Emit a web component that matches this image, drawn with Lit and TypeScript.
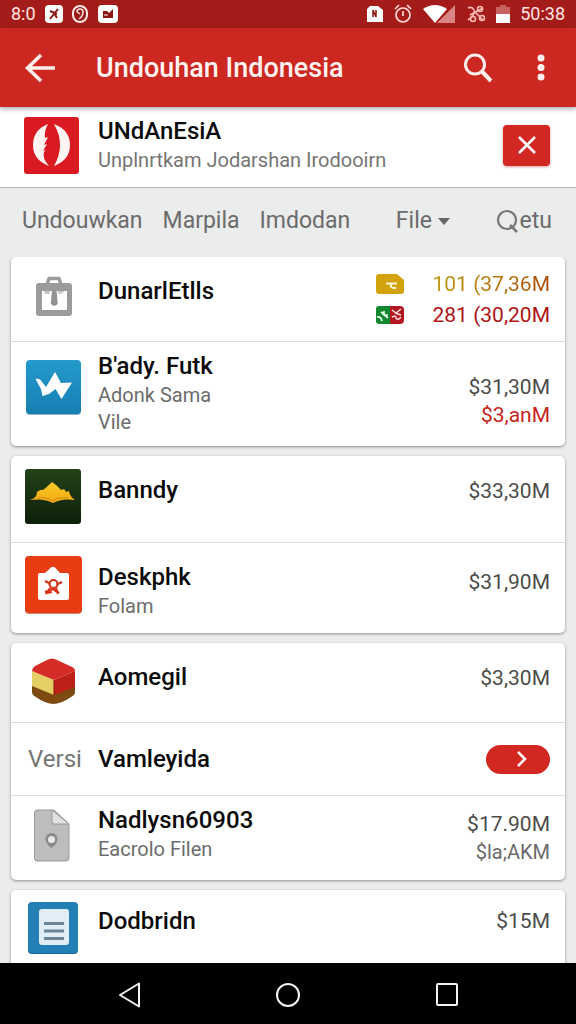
import { LitElement, html, css, nothing, TemplateResult } from "lit";
import { customElement, property } from "lit/decorators.js";

interface Amount {
  text: string;
  tone?: "amber" | "crimson" | "red" | "muted";
  badge?: "card" | "swap";
}

interface Row {
  kind: string;
  icon?: string;
  lead?: string;
  title: string;
  lines?: string[];
  amounts?: Amount[];
  action?: boolean;
}

const cards: Row[][] = [
  [
    {
      kind: "summary",
      icon: "case",
      title: "DunarlEtlls",
      amounts: [
        { text: "101 (37,36M", tone: "amber", badge: "card" },
        { text: "281 (30,20M", tone: "crimson", badge: "swap" },
      ],
    },
    {
      kind: "tall",
      icon: "wave",
      title: "B'ady. Futk",
      lines: ["Adonk Sama", "Vile"],
      amounts: [{ text: "$31,30M" }, { text: "$3,anM", tone: "red" }],
    },
  ],
  [
    { kind: "plain", icon: "crown", title: "Banndy", amounts: [{ text: "$33,30M" }] },
    { kind: "pair", icon: "bag", title: "Deskphk", lines: ["Folam"], amounts: [{ text: "$31,90M" }] },
  ],
  [
    { kind: "short", icon: "cube", title: "Aomegil", amounts: [{ text: "$3,30M" }] },
    { kind: "middle", lead: "Versi", title: "Vamleyida", action: true },
    {
      kind: "file",
      icon: "file",
      title: "Nadlysn60903",
      lines: ["Eacrolo Filen"],
      amounts: [{ text: "$17.90M" }, { text: "$la;AKM", tone: "muted" }],
    },
  ],
  [{ kind: "last", icon: "doc", title: "Dodbridn", amounts: [{ text: "$15M" }] }],
];

const art: Record<string, TemplateResult> = {
  case: html`<svg width="58" height="56" viewBox="0 0 58 56" aria-hidden="true">
    <path d="M22 15 24 8.500H34L36 15" fill="none" stroke="#9b9b9b" stroke-width="3.500" stroke-linejoin="round" />
    <rect x="11" y="13" width="36" height="33" rx="3" fill="#9b9b9b" />
    <rect x="17" y="21" width="25" height="19" fill="#fff" />
    <path d="M19 21H25L24 24H20ZM33 21H39L37 23.500H33Z" fill="#c4c4c4" />
    <path d="M27 20H31.500L32.500 31A3.500 3.500 0 1 1 26 31Z" fill="#929292" />
  </svg>`,
  wave: html`<svg width="58" height="58" viewBox="0 0 58 58" aria-hidden="true">
    <defs><linearGradient id="w" x1="0" y1="0" x2="0" y2="1"><stop offset="0" stop-color="#259acb" /><stop offset="1" stop-color="#167fb2" /></linearGradient></defs>
    <rect x="1" y="2" width="55" height="54" rx="4" fill="#14618b" opacity=".5" />
    <rect x="1" y="1" width="55" height="54" rx="4" fill="url(#w)" />
    <path d="M10.500 20Q15 19 17 23L21 28 30 13 36 24 47 23.500 36.500 40 30.500 30 24 35 17.500 37 16 30Z" fill="#fff" />
  </svg>`,
  crown: html`<svg width="58" height="56" viewBox="0 0 58 56" aria-hidden="true">
    <defs>
      <linearGradient id="g" x1="0" y1="0" x2="0" y2="1"><stop offset="0" stop-color="#24421a" /><stop offset="1" stop-color="#0d1f09" /></linearGradient>
      <linearGradient id="y" x1="0" y1="0" x2="0" y2="1"><stop offset="0" stop-color="#fbc92a" /><stop offset="1" stop-color="#f3a90f" /></linearGradient>
    </defs>
    <rect x="0" y="0" width="56" height="55" rx="3" fill="url(#g)" />
    <path d="M5 31Q12 29 12 23Q16 20 18 21Q22 18 27 13Q33 17 36 21Q40 19 41 23L44 22Q45 28 50 31Q37 29 28 34Q19 29 5 31Z" fill="url(#y)" />
    <path d="M13 29Q22 28 28 31.500Q34 28 43 29" fill="none" stroke="#c88a10" stroke-width="1" />
  </svg>`,
  bag: html`<svg width="58" height="58" viewBox="0 0 58 58" aria-hidden="true">
    <rect x="0" y="1" width="57" height="57" rx="4" fill="#b92f10" opacity=".6" />
    <rect x="0" y="0" width="57" height="57" rx="4" fill="#e83d12" />
    <path d="M13 19Q13 17 15 17H20L26 11.500Q28 10 30 11.500L35 17H42Q44 17 44 19V42Q44 44 42 44H15Q13 44 13 42Z" fill="#fff" />
    <g fill="none" stroke="#d8331a" stroke-width="2.200"><circle cx="28.500" cy="28" r="4" /><path d="M24 27 20 25M33 28 37 26M25 32 22 37 27 36M31 32 33 38M20 36 28 33 34 37" /></g>
  </svg>`,
  cube: html`<svg width="58" height="50" viewBox="0 0 58 50" aria-hidden="true">
    <path d="M7 28 29 36 50 25V36Q50 39 46 41Q36 48 28 48Q19 47 11 41Q7 39 7 36Z" fill="#7c4a10" />
    <path d="M7 15 29 24V39L7 30Z" fill="#e3cf63" />
    <path d="M50 15 29 24V39L50 31Z" fill="#bd2019" />
    <path d="M7 15Q7 12 10 10L22 4Q27 1 32 4L47 11Q50 12 50 15L29 24Z" fill="#d62c27" />
    <path d="M29 24V39" stroke="#8e1510" stroke-width="1" />
  </svg>`,
  file: html`<svg width="58" height="56" viewBox="0 0 58 56" aria-hidden="true">
    <path d="M12 1H29L44 15V49Q44 52 41 52H12Q9.500 52 9.500 49V4Q9.500 1 12 1Z" fill="#bdbdbd" stroke="#9a9a9a" />
    <path d="M27 1 44 15H29Q27 15 27 13Z" fill="#e1e1e1" stroke="#9a9a9a" />
    <path d="M20.500 30A6 6 0 1 1 32.500 30Q32.500 35 26.500 39Q20.500 35 20.500 30Z" fill="#8b8b8b" />
    <circle cx="26.500" cy="30.500" r="3.500" fill="#e9e9e9" />
  </svg>`,
  doc: html`<svg width="58" height="54" viewBox="0 0 58 54" aria-hidden="true">
    <rect x="3" y="1" width="50" height="51" rx="4" fill="#1d6593" />
    <rect x="3" y="0" width="50" height="51" rx="4" fill="#2380b4" />
    <path d="M17 7H41Q44 7 44 10V40Q44 43 41 43H17Q14 43 14 40V10Q14 7 17 7Z" fill="#e2edf5" />
    <path d="M19 21.500H39M19 29H39M19 36.500H39" stroke="#6b8499" stroke-width="3" />
  </svg>`,
};

const badges: Record<string, TemplateResult> = {
  card: html`<svg width="28" height="20" viewBox="0 0 28 20" aria-hidden="true">
    <path d="M3 0H21L28 6V17Q28 20 25 20H3Q0 20 0 17V3Q0 0 3 0Z" fill="#d3a30f" />
    <path d="M10 9.500H21M15 10Q14 14 18 14H20" fill="none" stroke="#fff6d8" stroke-width="2" />
  </svg>`,
  swap: html`<svg width="28" height="20" viewBox="0 0 28 20" aria-hidden="true">
    <path d="M3 1H14V19H3Q0 19 0 16V4Q0 1 3 1Z" fill="#12892f" />
    <path d="M14 1H24Q28 1 28 5V15Q28 19 24 19H14Z" fill="#b31822" />
    <path d="M1 12Q5 11 6 16M5 7 12 13M8 6V10H12" fill="none" stroke="#e8ffe9" stroke-width="1.700" />
    <path d="M16 5 20 8 25 4M19 8 25 10M16 12Q20 10 20 13Q22 16 25 12" fill="none" stroke="#ffd9d9" stroke-width="1.500" />
  </svg>`,
};

@customElement("status-bar")
class StatusBar extends LitElement {
  static styles = css`
    :host { display: flex; align-items: center; justify-content: space-between; height: 28px; padding: 0 11px; background: #a31c19; color: #ffe3e0; font-size: 18px; line-height: 24px; box-sizing: border-box; }
    .side { display: flex; align-items: center; }
    .left { gap: 9px; }
    .right { gap: 10px; }
    svg { display: block; }
  `;
  render() {
    return html`
      <div class="side left">
        <span>8:0</span>
        <svg width="18" height="18" viewBox="0 0 18 18"><rect width="18" height="18" rx="4" fill="#fff" /><path d="M5 14 13 4M5 6 12 9M9 8 12 13" stroke="#8d1714" stroke-width="2" /></svg>
        <svg width="16" height="18" viewBox="0 0 16 18"><rect x="1" y="1" width="14" height="16" rx="7" fill="#9b1a18" stroke="#ffe8e6" stroke-width="2" /><path d="M5 7A3 3 0 1 1 11 7Q11 11 7 14M5 7 8 9" fill="none" stroke="#ffe8e6" stroke-width="1.500" /></svg>
        <svg width="22" height="18" viewBox="0 0 22 18"><rect x="1" width="20" height="18" rx="4" fill="#fff" /><path d="M6 6H10L12 8 16 4V13H6Z" fill="#8d1714" /><path d="M7 10H11" stroke="#fff" /></svg>
      </div>
      <div class="side right">
        <svg width="18" height="18" viewBox="0 0 18 18"><path d="M4 1H12L17 5V17H1V4Z" fill="#fff" /><path d="M7 12V5L10 12V5" fill="none" stroke="#8d1714" stroke-width="1.500" /></svg>
        <svg width="18" height="20" viewBox="0 0 18 20"><circle cx="9" cy="11" r="7" fill="none" stroke="#ffd9d6" stroke-width="1.700" /><path d="M1 5 5 1M17 5 13 1M9 7V12" fill="none" stroke="#ffd9d6" stroke-width="1.700" /></svg>
        <svg width="34" height="20" viewBox="0 0 34 20"><path d="M33 1V19H15Z" fill="#d98583" /><path d="M1 5Q13 -3 25 5L13 19Z" fill="#fff" /></svg>
        <svg width="20" height="18" viewBox="0 0 20 18"><g fill="none" stroke="#ffb9b6" stroke-width="1.600"><path d="M2 3Q6 1 8 5T2 15M4 10 17 3M9 7 17 15" /><circle cx="14" cy="4" r="2.500" /><circle cx="7" cy="14" r="2.500" /><circle cx="16" cy="13" r="2.500" /></g></svg>
        <svg width="14" height="18" viewBox="0 0 14 18"><path d="M4 0H10V2H14V10H0V2H4Z" fill="#c76260" /><path d="M0 9H14V18H0Z" fill="#fff" /></svg>
        <span>50:38</span>
      </div>
    `;
  }
}

@customElement("storage-row")
class StorageRow extends LitElement {
  @property({ attribute: false }) row!: Row;

  static styles = css`
    :host { display: block; }
    .row { display: grid; grid-template-columns: 58px 1fr auto; column-gap: 15px; align-items: start; padding: 0 15px 0 14px; box-sizing: border-box; min-height: 86px; }
    svg { display: block; }
    .lead { padding-top: 13px; }
    .label { padding-left: 3px; font-size: 24px; line-height: 28px; color: #757575; }
    .text { padding-top: 20px; }
    .title { margin: 0; font-size: 24px; line-height: 28px; font-weight: 500; color: #0b0b0b; white-space: nowrap; }
    .line { margin: 0; font-size: 20px; line-height: 27px; padding-top: 2px; color: #6c6c6c; }
    .line + .line { padding-top: 0; }
    .aside { padding-top: 21px; display: flex; flex-direction: column; align-items: flex-end; }
    .amount { display: flex; align-items: center; gap: 29px; font-size: 21px; line-height: 28px; color: #4c4c4c; }
    .amber span { color: transparent; background: linear-gradient(90deg, #bd9a12, #b9780f 50%, #a64c0c); background-clip: text; -webkit-background-clip: text; }
    .crimson { color: #ae1418; }
    .red { color: #c62422; }
    .muted { color: #6a6a6a; font-size: 20px; }
    .summary { min-height: 84px; }
    .summary .aside { padding-top: 13px; gap: 3px; }
    .tall { min-height: 104px; }
    .tall .lead { padding-top: 17px; }
    .tall .text, .file .text { padding-top: 10px; }
    .tall .aside { padding-top: 31px; }
    .pair { min-height: 90px; }
    .pair .aside { padding-top: 25px; }
    .short { min-height: 79px; }
    .middle { min-height: 72px; align-items: center; }
    .middle .lead, .middle .text, .middle .aside { padding-top: 0; }
    .file { min-height: 84px; }
    .file .aside { padding-top: 14px; }
    .last .lead { padding-top: 12px; }
    .last .text, .last .aside { padding-top: 17px; }
    .go { width: 64px; height: 29px; padding: 0 0 0 8px; border: 0; border-radius: 15px; background: #d32822; display: flex; align-items: center; justify-content: center; }
  `;

  render() {
    const r = this.row;
    return html`
      <div class="row ${r.kind}">
        <div class="lead">${r.icon ? art[r.icon] : html`<span class="label">${r.lead}</span>`}</div>
        <div class="text">
          <h2 class="title">${r.title}</h2>
          ${(r.lines ?? []).map((l) => html`<p class="line">${l}</p>`)}
        </div>
        <div class="aside">
          ${(r.amounts ?? []).map(
            (a) => html`<div class="amount ${a.tone ?? ""}">${a.badge ? badges[a.badge] : nothing}<span>${a.text}</span></div>`
          )}
          ${r.action
            ? html`<button class="go" aria-label="Open ${r.title}">
                <svg width="12" height="18" viewBox="0 0 12 18"><path d="M2 2 9 9 2 16" fill="none" stroke="#fff" stroke-width="2.500" /></svg>
              </button>`
            : nothing}
        </div>
      </div>
    `;
  }
}

@customElement("app-root")
class AppRoot extends LitElement {
  static styles = css`
    :host { display: flex; flex-direction: column; height: 100vh; overflow: hidden; background: #ebecec; font-family: Roboto, "Liberation Sans", sans-serif; }
    button { font: inherit; color: inherit; cursor: pointer; }
    svg { display: block; }
    .bar { display: flex; align-items: center; flex: none; height: 79px; padding: 0 25px 0 24px; background: #cd2722; color: #fff; box-shadow: 0 2px 5px #0005; z-index: 1; }
    .plain { border: 0; padding: 0; background: none; }
    .heading { flex: 1; margin: 0 0 0 40px; font-size: 27px; line-height: 32px; font-weight: 500; color: #fff2f0; white-space: nowrap; }
    .tools { display: flex; align-items: center; gap: 38px; }
    .account { display: flex; align-items: center; flex: none; height: 81px; padding: 0 26px 4px 24px; box-sizing: border-box; background: #fff; border-bottom: 1px solid #b5b5b5; }
    .who { flex: 1; margin-left: 19px; }
    .name { margin: 0; font-size: 24px; line-height: 30px; font-weight: 500; color: #0b0b0b; }
    .info { margin: 0; font-size: 20px; line-height: 28px; color: #757575; white-space: nowrap; }
    .close { width: 47px; height: 41px; padding: 0; border: 0; border-radius: 4px; background: #d32724; display: flex; align-items: center; justify-content: center; box-shadow: 0 1px 3px #a006; }
    .tabs { display: flex; align-items: center; justify-content: space-between; flex: none; height: 69px; padding: 0 24px 4px 22px; box-sizing: border-box; font-size: 23px; line-height: 30px; color: #6b6b6b; }
    .group { display: flex; gap: 20px; }
    .tab { color: inherit; text-decoration: none; }
    .menu, .find { display: flex; align-items: center; }
    .menu { gap: 6px; }
    .find { gap: 1px; }
    .list { display: flex; flex-direction: column; gap: 10px; flex: 1; min-height: 0; overflow: hidden; padding: 0 11px; }
    .card { flex: none; background: #fff; border-radius: 5px; box-shadow: 0 1px 3px #0006; }
    .card storage-row + storage-row { border-top: 1px solid #dcdede; }
    .keys { display: flex; align-items: center; justify-content: center; flex: none; height: 61px; gap: 133px; padding-top: 3px; box-sizing: border-box; background: #000; }
  `;

  render() {
    return html`
      <status-bar></status-bar>
      <header class="bar">
        <button class="plain" aria-label="Back">
          <svg width="32" height="30" viewBox="0 0 32 30"><path d="M31 15H4M17 2 3.500 15 17 28" fill="none" stroke="#fff0ee" stroke-width="3.500" /></svg>
        </button>
        <h1 class="heading">Undouhan Indonesia</h1>
        <div class="tools">
          <button class="plain" aria-label="Search">
            <svg width="30" height="30" viewBox="0 0 30 30"><circle cx="12" cy="11.500" r="9.500" fill="none" stroke="#fff0ee" stroke-width="3" /><path d="M19 18.500 28 28" stroke="#fff0ee" stroke-width="4" /></svg>
          </button>
          <button class="plain" aria-label="More">
            <svg width="20" height="28" viewBox="0 0 20 28"><g fill="#fff0ee"><circle cx="10" cy="4" r="3.500" /><circle cx="10" cy="13.500" r="3.500" /><circle cx="10" cy="23" r="3.500" /></g></svg>
          </button>
        </div>
      </header>
      <section class="account">
        <svg width="55" height="57" viewBox="0 0 55 57" aria-hidden="true">
          <rect width="55" height="57" rx="3" fill="#d91a22" />
          <path d="M24 7Q9 13 9 28Q9 43 25 49Q18 41 20 35L22 33 19 34 23 27 20 28 24 20 21 21Q20 14 24 7Z" fill="#fff4f2" />
          <path d="M30 7Q46 13 46 28Q46 43 30 49Q42 28 30 7Z" fill="#fff4f2" />
        </svg>
        <div class="who">
          <p class="name">UNdAnEsiA</p>
          <p class="info">Unplnrtkam Jodarshan Irodooirn</p>
        </div>
        <button class="close" aria-label="Close">
          <svg width="20" height="20" viewBox="0 0 20 20"><path d="M2 2 18 18M18 2 2 18" stroke="#fff" stroke-width="2.500" /></svg>
        </button>
      </section>
      <nav class="tabs">
        <div class="group">
          <a class="tab" href="#undouwkan">Undouwkan</a>
          <a class="tab" href="#marpila">Marpila</a>
          <a class="tab" href="#imdodan">Imdodan</a>
        </div>
        <button class="plain menu">File<svg width="12" height="8" viewBox="0 0 12 8"><path d="M0 1H12L6 8Z" fill="#666" /></svg></button>
        <button class="plain find"><svg width="23" height="24" viewBox="0 0 23 24"><circle cx="11" cy="11" r="9" fill="none" stroke="#777" stroke-width="2.200" /><path d="M14 16 21 23" stroke="#777" stroke-width="2.500" /></svg>etu</button>
      </nav>
      <main class="list">
        ${cards.map((c) => html`<section class="card">${c.map((r) => html`<storage-row .row=${r}></storage-row>`)}</section>`)}
      </main>
      <footer class="keys">
        <button class="plain" aria-label="Back key"><svg width="26" height="26" viewBox="0 0 26 26"><path d="M23 1.500V24.500L4 13Z" fill="none" stroke="#f2f2f2" stroke-width="2" stroke-linejoin="round" /></svg></button>
        <button class="plain" aria-label="Home key"><svg width="26" height="26" viewBox="0 0 26 26"><circle cx="13" cy="13" r="11" fill="none" stroke="#f2f2f2" stroke-width="2" /></svg></button>
        <button class="plain" aria-label="Recent key"><svg width="26" height="26" viewBox="0 0 26 26"><rect x="3" y="2" width="20" height="21" rx="1" fill="none" stroke="#f2f2f2" stroke-width="2" /></svg></button>
      </footer>
    `;
  }
}
